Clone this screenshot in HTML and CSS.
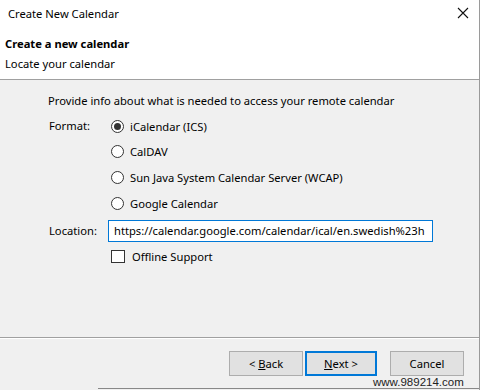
FILE: index.html
```html
<!DOCTYPE html>
<html>
<head>
<meta charset="utf-8">
<link rel="stylesheet" href="styles.css">
</head>
<body>
<div class="window">
  <div class="titlebar">
    <span class="title">Create New Calendar</span>
    <svg class="close" width="12" height="12" viewBox="0 0 12 12"><path d="M1 1L11 11M11 1L1 11" stroke="#111" stroke-width="1.1" fill="none"/></svg>
  </div>
  <div class="header">
    <div class="h-title">Create a new calendar</div>
    <div class="h-sub">Locate your calendar</div>
  </div>
  <div class="content">
    <div class="intro">Provide info about what is needed to access your remote calendar</div>
    <div class="form">
      <div class="label">Format:</div>
      <div class="options">
        <div class="opt"><span class="radio checked"></span><span>iCalendar (ICS)</span></div>
        <div class="opt"><span class="radio"></span><span>CalDAV</span></div>
        <div class="opt"><span class="radio"></span><span>Sun Java System Calendar Server (WCAP)</span></div>
        <div class="opt"><span class="radio"></span><span>Google Calendar</span></div>
      </div>
      <div class="label loc">Location:</div>
      <div class="input">https://calendar.google.com/calendar/ical/en.swedish%23h</div>
      <div></div>
      <div class="opt check-row"><span class="checkbox"></span><span>Offline Support</span></div>
    </div>
  </div>
  <div class="footer">
    <div class="buttons">
      <div class="btn"><span>&lt; <u>B</u>ack</span></div>
      <div class="btn focus"><span><u>N</u>ext &gt;</span></div>
      <div class="btn cancel"><span>Cancel</span></div>
    </div>
    <div class="watermark">www.989214.com</div>
    <div class="bottomline"></div>
  </div>
</div>
</body>
</html>
```
FILE: styles.css
```css
* { box-sizing: border-box; }
html, body { margin: 0; padding: 0; }
body {
  width: 480px;
  height: 390px;
  overflow: hidden;
  background: #f0f0f0;
  font-family: "Noto Sans", "Open Sans", sans-serif;
  font-size: 11.2px;
  color: #000;
}
.window {
  width: 480px;
  height: 390px;
  border-right: 1px solid #9a9a9a;
  display: flex;
  flex-direction: column;
}
.titlebar {
  background: #fff;
  height: 30px;
  display: flex;
  align-items: center;
  justify-content: space-between;
  padding: 0 10px 3px 8px;
}
.close { display: block; margin-top: -2px; }
.header {
  background: #fff;
  height: 50px;
  padding-left: 5px;
  border-bottom: 1px solid #a0a0a0;
}
.h-title { font-weight: bold; line-height: 20px; margin-top: 4px; }
.h-sub { line-height: 20px; }
.content {
  padding: 12px 0 0 48px;
  flex: 1;
  border-bottom: 1px solid #a0a0a0;
}
.intro { line-height: 18px; }
.form {
  display: grid;
  grid-template-columns: 59px auto;
  margin-top: 7px;
  margin-left: 1px;
}
.label { line-height: 18px; }
.options { display: flex; flex-direction: column; gap: 7.7px; margin-left: 3px; }
.opt { display: flex; align-items: center; height: 18px; gap: 6px; }
.radio {
  width: 13px; height: 13px;
  border: 1px solid #333;
  border-radius: 50%;
  background: #fff;
  display: flex; align-items: center; justify-content: center;
}
.radio.checked::after {
  content: "";
  width: 7px; height: 7px;
  border-radius: 50%;
  background: #333;
}
.loc { margin-top: 8px; line-height: 22px; }
.input {
  margin-top: 8px;
  width: 325px;
  height: 22px;
  border: 1px solid #0078d7;
  background: #fff;
  line-height: 20px;
  padding-left: 5px;
  white-space: nowrap;
  overflow: hidden;
}
.check-row { margin-top: 5px; margin-left: 3px; gap: 7px; }
.checkbox {
  width: 14px; height: 13px;
  border: 1px solid #333;
  background: #fff;
}
.footer {
  height: 52px;
  border-top: 1px solid #fff;
  display: flex;
  flex-direction: column;
}
.buttons {
  display: flex;
  padding: 12px 0 0 229px;
  gap: 2px;
}
.btn {
  width: 74px;
  height: 25px;
  background: #e1e1e1;
  border: 1px solid #adadad;
  display: flex; align-items: center; justify-content: center;
}
.btn.focus { width: 72px; border: 2px solid #0078d7; }
.btn.cancel { margin-left: 11px; }
.watermark {
  font-family: "Liberation Sans", Arial, sans-serif;
  font-size: 11.5px;
  line-height: 11px;
  color: #222;
  margin-left: 373px;
  margin-top: 1px;
  height: 11px;
}
.bottomline {
  margin-left: 98px;
  border-top: 1px solid #888;
}
```
